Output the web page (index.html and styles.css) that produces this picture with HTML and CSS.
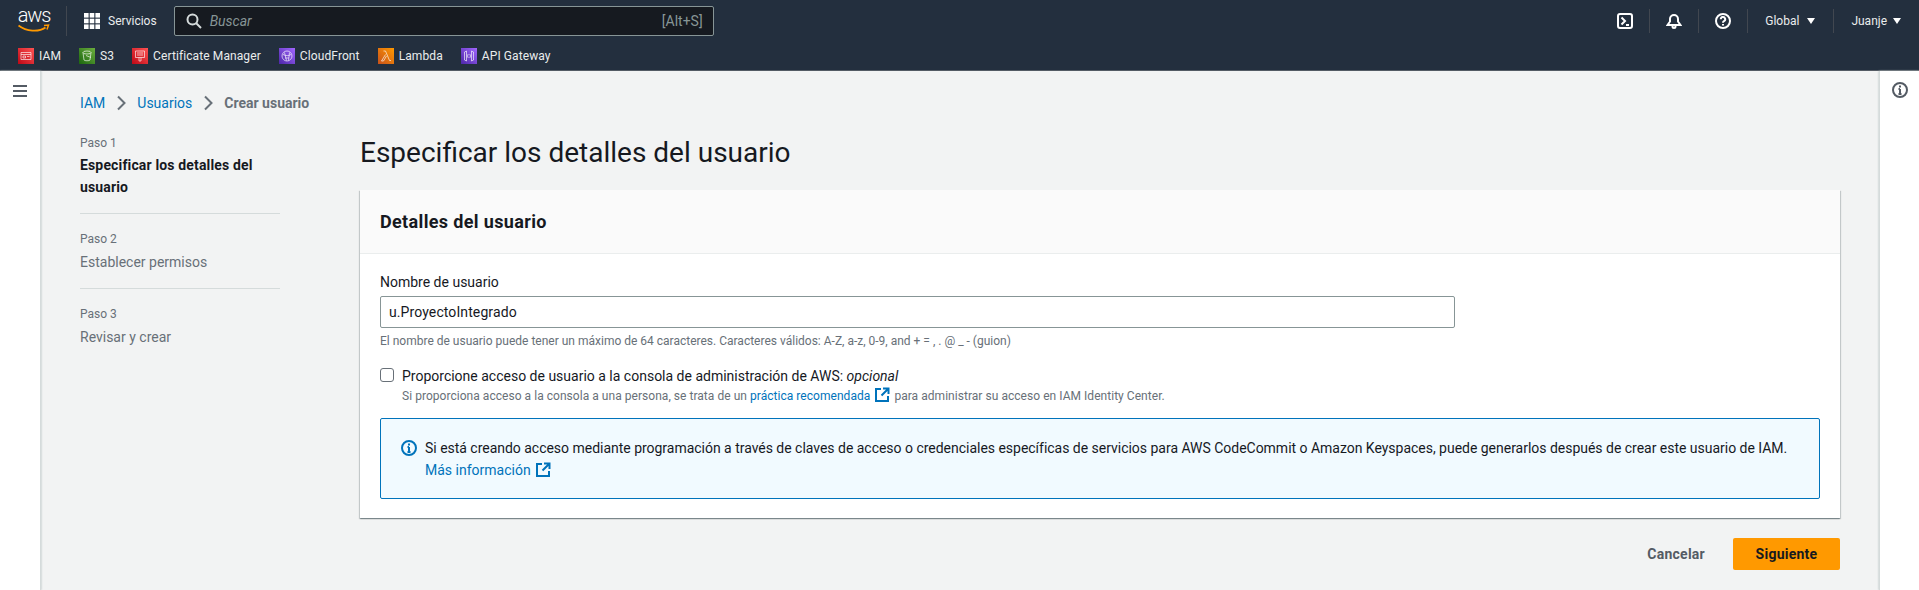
FILE: index.html
```html
<!DOCTYPE html>
<html lang="es">
<head>
  <meta charset="UTF-8" />
  <title>Crear usuario | IAM</title>
  <link rel="stylesheet" href="styles.css">
</head>
<body>
  <header class="topnav">
    <div class="topnav-row">
      <div class="aws-logo">
        <span class="aws-word">aws</span>
        <svg class="aws-smile" width="32" height="9" viewBox="0 0 32 9"><path d="M0.500 1.500c8 6 20 7 27 2" fill="none" stroke="#f90" stroke-width="1.800"/><path d="M26 1.500l4.500-.5-1.500 4.500" fill="none" stroke="#f90" stroke-width="1.500"/></svg>
      </div>
      <div class="services">
        <svg width="16" height="16" viewBox="0 0 16 16" fill="#fff"><rect width="4.600" height="4.600"/><rect x="5.700" width="4.600" height="4.600"/><rect x="11.400" width="4.600" height="4.600"/><rect y="5.700" width="4.600" height="4.600"/><rect x="5.700" y="5.700" width="4.600" height="4.600"/><rect x="11.400" y="5.700" width="4.600" height="4.600"/><rect y="11.400" width="4.600" height="4.600"/><rect x="5.700" y="11.400" width="4.600" height="4.600"/><rect x="11.400" y="11.400" width="4.600" height="4.600"/></svg>
        <span>Servicios</span>
      </div>
      <div class="search">
        <svg width="16" height="16" viewBox="0 0 16 16" fill="none" stroke="#d5dbdb" stroke-width="2"><circle cx="6.500" cy="6.500" r="5"/><path d="M10 10l5 5"/></svg>
        <span class="search-text">Buscar</span>
        <span class="search-key">[Alt+S]</span>
      </div>
      <div class="top-actions">
        <div class="action">
          <svg width="16" height="16" viewBox="0 0 16 16" fill="none" stroke="#fff" stroke-width="2"><rect x="1" y="1" width="14" height="14" rx="2"/><path d="M4.500 4.500L8 8l-3.500 3.500M9 12h3"/></svg>
        </div>
        <div class="action">
          <svg width="16" height="16" viewBox="0 0 16 16" fill="none" stroke="#fff" stroke-width="2"><path d="M1.500 12h13l-2.500-3.500V6a4 4 0 0 0-8 0v2.500z"/><circle cx="8" cy="13.500" r="1.500"/></svg>
        </div>
        <div class="action">
          <svg width="16" height="16" viewBox="0 0 16 16" fill="none" stroke="#fff" stroke-width="2"><circle cx="8" cy="8" r="7"/><path d="M5.800 6.200a2.200 2.200 0 1 1 3.200 2c-.7.400-1 .8-1 1.500"/><path d="M8 11v1.500"/></svg>
        </div>
        <div class="action menu"><span>Global</span><i class="caret"></i></div>
        <div class="action menu user"><span>Juanje</span><i class="caret"></i></div>
      </div>
    </div>
    <div class="favs">
      <div class="fav"><i class="fav-icon red"><svg width="12" height="12" viewBox="0 0 12 12" fill="none" stroke="#fff" stroke-width=".8" stroke-opacity=".8"><path d="M1 2.500h10v7H1zM1 4.500h10M3 6h2.500v2H3zM7 6.500h2.500"/></svg></i>IAM</div>
      <div class="fav"><i class="fav-icon green"><svg width="12" height="12" viewBox="0 0 12 12" fill="none" stroke="#fff" stroke-width=".8" stroke-opacity=".8"><ellipse cx="6" cy="2.500" rx="4" ry="1.500"/><path d="M2 2.500l1 7.500c.5 1 5.500 1 6 0l1-7.500M5 5.500l5 2"/></svg></i>S3</div>
      <div class="fav"><i class="fav-icon red"><svg width="12" height="12" viewBox="0 0 12 12" fill="none" stroke="#fff" stroke-width=".8" stroke-opacity=".8"><path d="M1.500 1h9v6.500h-9zM3 3h6M3 5h6M5 7.500v3.500h2V7.500"/></svg></i>Certificate Manager</div>
      <div class="fav"><i class="fav-icon purple"><svg width="12" height="12" viewBox="0 0 12 12" fill="none" stroke="#fff" stroke-width=".8" stroke-opacity=".8"><circle cx="6" cy="6" r="5"/><path d="M3.500 2.500l2 8M8.500 2.500l-1 8M2 4.500c3 1.500 5.500 1.500 8 0M4 8h4"/></svg></i>CloudFront</div>
      <div class="fav"><i class="fav-icon orange"><svg width="12" height="12" viewBox="0 0 12 12" fill="none" stroke="#fff" stroke-width=".8" stroke-opacity=".8"><path d="M3.500 1h2l4 9.500h1.500M5.500 4.500L1.500 11h2l3-5"/></svg></i>Lambda</div>
      <div class="fav"><i class="fav-icon purple"><svg width="12" height="12" viewBox="0 0 12 12" fill="none" stroke="#fff" stroke-width=".8" stroke-opacity=".8"><path d="M1.500 2v8l2 1V1zM10.500 2v8l-2 1V1zM5.200 4L4.500 6l.7 2M6.800 4l.7 2-.7 2"/></svg></i>API Gateway</div>
    </div>
  </header>

  <div class="layout">
    <aside class="side-left">
      <svg width="16" height="14" viewBox="0 0 16 14" fill="none" stroke="#545b64" stroke-width="2"><path d="M1 2h14M1 7h14M1 12h14"/></svg>
    </aside>

    <main class="content">
      <nav class="breadcrumbs">
        <a href="#">IAM</a>
        <svg width="16" height="16" viewBox="0 0 16 16" fill="none" stroke="#687078" stroke-width="2"><path d="M5 1.500L11.500 8 5 14.500"/></svg>
        <a href="#">Usuarios</a>
        <svg width="16" height="16" viewBox="0 0 16 16" fill="none" stroke="#687078" stroke-width="2"><path d="M5 1.500L11.500 8 5 14.500"/></svg>
        <span class="crumb-current">Crear usuario</span>
      </nav>

      <div class="wizard">
        <ul class="steps">
          <li class="step">
            <small>Paso 1</small>
            <strong>Especificar los detalles del usuario</strong>
          </li>
          <li class="step">
            <small>Paso 2</small>
            <span>Establecer permisos</span>
          </li>
          <li class="step">
            <small>Paso 3</small>
            <span>Revisar y crear</span>
          </li>
        </ul>

        <div class="form-area">
          <h1>Especificar los detalles del usuario</h1>

          <section class="card">
            <div class="card-head"><h2>Detalles del usuario</h2></div>
            <div class="card-body">
              <label class="field-label">Nombre de usuario</label>
              <div class="text-input">u.ProyectoIntegrado</div>
              <p class="hint">El nombre de usuario puede tener un máximo de 64 caracteres. Caracteres válidos: A-Z, a-z, 0-9, and + = , . @ _ - (guion)</p>

              <div class="check-row">
                <i class="checkbox"></i>
                <div>
                  <div class="check-label">Proporcione acceso de usuario a la consola de administración de AWS: <em>opcional</em></div>
                  <p class="check-hint">Si proporciona acceso a la consola a una persona, se trata de un <a href="#">práctica recomendada</a>
                    <svg class="ext" width="16" height="16" viewBox="0 0 16 16" fill="none" stroke="#0073bb" stroke-width="2"><path d="M7 2H2v12h12V9M9 1.500h5.500V7M14 2L7.500 8.500"/></svg>
                    para administrar su acceso en IAM Identity Center.</p>
                </div>
              </div>

              <div class="info-box">
                <svg class="info-icon" width="16" height="16" viewBox="0 0 16 16" fill="none" stroke="#0073bb" stroke-width="2"><circle cx="8" cy="8" r="7"/><path d="M8 7v5M6.500 12h3M6.500 7H8"/><path d="M8 3.500v2"/></svg>
                <div>
                  <div class="info-text">Si está creando acceso mediante programación a través de claves de acceso o credenciales específicas de servicios para AWS CodeCommit o Amazon Keyspaces, puede generarlos después de crear este usuario de IAM.</div>
                  <div class="info-link"><a href="#">Más información</a>
                    <svg class="ext" width="16" height="16" viewBox="0 0 16 16" fill="none" stroke="#0073bb" stroke-width="2"><path d="M7 2H2v12h12V9M9 1.500h5.500V7M14 2L7.500 8.500"/></svg>
                  </div>
                </div>
              </div>
            </div>
          </section>

          <div class="actions">
            <span class="btn-link">Cancelar</span>
            <span class="btn-primary">Siguiente</span>
          </div>
        </div>
      </div>
    </main>

    <aside class="side-right">
      <svg width="16" height="16" viewBox="0 0 16 16" fill="none" stroke="#545b64" stroke-width="2"><circle cx="8" cy="8" r="7"/><path d="M8 7v5M6.500 12h3M6.500 7H8"/><path d="M8 3.500v2"/></svg>
    </aside>
  </div>
</body>
</html>
```

FILE: styles.css
```css
* {
  box-sizing: border-box;
}

html, body {
  height: 590px;
  overflow: hidden;
}

body {
  margin: 0;
  font-family: Roboto, "Noto Sans", sans-serif;
  font-size: 14px;
  line-height: 22px;
  color: #16191f;
  background: #f2f3f3;
  display: flex;
  flex-direction: column;
}

a {
  color: #0073bb;
  text-decoration: none;
}

/* top bar */
.topnav {
  height: 71px;
  flex: none;
  background: #232f3e;
  border-bottom: 1px solid #545b64;
  color: #fff;
}

.topnav-row {
  height: 41px;
  display: flex;
  align-items: center;
  padding-left: 18px;
}

.aws-logo {
  width: 32px;
  height: 30px;
  display: flex;
  flex-direction: column;
  align-items: center;
}

.aws-word {
  font-size: 20px;
  font-weight: 300;
  line-height: 19px;
  letter-spacing: -1.2px;
}

.aws-smile {
  margin-top: -1px;
}

.services {
  display: flex;
  align-items: center;
  gap: 8px;
  margin-left: 16px;
  padding-left: 17px;
  height: 30px;
  border-left: 1px solid #414750;
  font-size: 12px;
  color: #eaeded;
}

.search {
  width: 540px;
  height: 30px;
  margin-left: 17px;
  padding: 0 10px 0 11px;
  display: flex;
  align-items: center;
  background: #161a20;
  border: 1px solid #879596;
  border-radius: 2px;
}

.search-text {
  margin-left: 8px;
  font-style: italic;
  color: #879596;
  flex: 1;
}

.search-key {
  color: #879596;
}

.top-actions {
  margin-left: auto;
  display: flex;
  align-items: center;
  font-size: 12px;
  color: #eaeded;
}

.action {
  height: 24px;
  padding: 0 16px;
  display: flex;
  align-items: center;
  gap: 8px;
  border-left: 1px solid #414750;
}

.action:first-child {
  border-left: none;
}

.menu {
  padding: 0 18px 0 17px;
}

.user {
  gap: 6px;
}

.caret {
  width: 0;
  height: 0;
  border-left: 4px solid transparent;
  border-right: 4px solid transparent;
  border-top: 6px solid #fff;
}

.favs {
  height: 29px;
  padding-left: 18px;
  display: flex;
  align-items: center;
  gap: 18px;
  font-size: 12px;
  letter-spacing: 0.1px;
  color: #eaeded;
}

.fav {
  display: flex;
  align-items: center;
  gap: 5px;
}

.fav-icon {
  width: 16px;
  height: 16px;
  display: flex;
  align-items: center;
  justify-content: center;
}

.red { background: linear-gradient(45deg, #bd0816, #ff5252); }
.green { background: linear-gradient(45deg, #1b660f, #6cae3e); }
.purple { background: linear-gradient(45deg, #4d27a8, #a166ff); }
.orange { background: linear-gradient(45deg, #c8511b, #ff9900); }

/* page layout */
.layout {
  flex: 1;
  display: flex;
  min-height: 0;
}

.side-left, .side-right {
  flex: none;
  background: #fff;
  display: flex;
  justify-content: center;
  align-items: flex-start;
}

.side-left {
  width: 41px;
  padding: 13px 1px 0 0;
  border-right: 1px solid #d5dbdb;
  box-shadow: 0 0 2px #aab7b8;
}

.side-right {
  width: 40px;
  padding-top: 11px;
  border-left: 1px solid #d5dbdb;
  box-shadow: 0 0 2px #aab7b8;
}

.content {
  flex: 1;
  padding: 21px 39px 0 39px;
}

.breadcrumbs {
  display: flex;
  align-items: center;
  gap: 7px;
  height: 22px;
}

.breadcrumbs svg {
  margin: 0 1px;
}

.crumb-current {
  color: #687078;
  font-weight: 700;
}

.wizard {
  display: grid;
  grid-template-columns: 200px 1fr;
  column-gap: 80px;
  margin-top: 18px;
}

.steps {
  list-style: none;
  margin: 0;
  padding: 0;
}

.step {
  padding-bottom: 15px;
  margin-bottom: 14px;
  border-bottom: 1px solid #d5dbdb;
  color: #687078;
}

.step:last-child {
  border-bottom: none;
}

.step small {
  display: block;
  font-size: 12px;
  line-height: 23px;
}

.step strong {
  color: #16191f;
  display: block;
  margin-top: -1px;
  font-weight: 700;
  letter-spacing: 0.15px;
}

h1 {
  font-size: 28px;
  line-height: 36px;
  font-weight: 400;
  margin: 3px 0 19px;
}

.card {
  background: #fff;
  box-shadow: 0 1px 1px 0 rgba(0, 28, 36, 0.3), 1px 1px 1px 0 rgba(0, 28, 36, 0.15), -1px 1px 1px 0 rgba(0, 28, 36, 0.15);
}

.card-head {
  height: 64px;
  padding: 0 20px;
  display: flex;
  align-items: center;
  background: #fafafa;
  border-bottom: 1px solid #eaeded;
}

h2 {
  margin: 0;
  font-size: 18px;
  font-weight: 700;
  letter-spacing: 0.35px;
}

.card-body {
  padding: 17px 20px 19px;
}

.field-label {
  display: block;
  margin-bottom: 3px;
}

.text-input {
  width: 1075px;
  height: 32px;
  padding: 0 8px;
  border: 1px solid #879596;
  border-radius: 2px;
  line-height: 30px;
  letter-spacing: 0.1px;
}

.hint {
  margin: 5px 0 0;
  font-size: 12px;
  line-height: 16px;
  color: #687078;
}

.check-row {
  display: flex;
  gap: 8px;
  margin-top: 16px;
}

.checkbox {
  width: 14px;
  height: 14px;
  margin-top: 3px;
  border: 1px solid #687078;
  border-radius: 3px;
  flex: none;
}

.check-hint {
  margin: 0;
  font-size: 12px;
  line-height: 16px;
  letter-spacing: 0.04px;
  color: #687078;
}

.ext {
  vertical-align: -3px;
  margin: 0 1px;
}

.info-box {
  margin-top: 14px;
  height: 81px;
  padding: 18px 20px 0;
  display: flex;
  gap: 8px;
  background: #f1faff;
  border: 1px solid #0073bb;
  border-radius: 2px;
}

.info-icon {
  flex: none;
  margin-top: 3px;
}

.info-text {
  letter-spacing: -0.02px;
}

.actions {
  margin-top: 20px;
  display: flex;
  justify-content: flex-end;
  align-items: center;
  gap: 28px;
  font-weight: 700;
  letter-spacing: 0.25px;
}

.btn-link {
  color: #545b64;
}

.btn-primary {
  width: 107px;
  height: 32px;
  line-height: 32px;
  text-align: center;
  background: #ff9900;
  border-radius: 2px;
}
```
